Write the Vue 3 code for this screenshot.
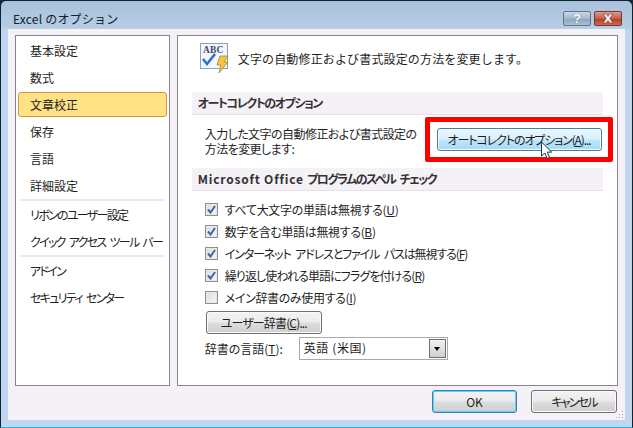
<script setup>
const groups = [
  [{ t: '基本設定' }, { t: '数式' }, { t: '文章校正', sel: true }, { t: '保存' }, { t: '言語' }, { t: '詳細設定' }],
  [{ t: 'リボンのユーザー設定', kana: true }, { t: 'クイック アクセス ツール バー', kana: true }],
  [{ t: 'アドイン', kana: true }, { t: 'セキュリティ センター', kana: true }]
]
const checks = [
  { t: 'すべて大文字の単語は無視する(', k: 'U', on: true, ls: -0.3 },
  { t: '数字を含む単語は無視する(', k: 'B', on: true, ls: -0.35 },
  { t: 'インターネット アドレスとファイル パスは無視する(', k: 'F', on: true, ls: -1.12 },
  { t: '繰り返し使われる単語にフラグを付ける(', k: 'R', on: true, ls: -0.9 },
  { t: 'メイン辞書のみ使用する(', k: 'I', on: false, ls: -0.35 }
]
</script>

<template>
  <div class="window">
    <div class="titlebar">
      <span class="title">Excel のオプション</span>
      <div class="controls">
        <div class="ctl help">?</div>
        <div class="ctl close">
          <svg width="16" height="11" viewBox="0 0 16 11"><path d="M3 1h3l2 2.5L10 1h3L9.6 5.5 13 10h-3L8 7.5 6 10H3l3.4-4.5z" fill="#fff" stroke="#7a2a20" stroke-width=".6"/></svg>
        </div>
      </div>
    </div>
    <div class="client">
      <div class="panes">
        <nav class="nav">
          <template v-for="(g, i) in groups" :key="i">
            <div v-if="i" class="sep"></div>
            <div v-for="it in g" :key="it.t" class="item" :class="{ sel: it.sel, kana: it.kana }">{{ it.t }}</div>
          </template>
        </nav>
        <main class="main">
          <div class="intro">
            <svg class="abc" width="29" height="31" viewBox="0 0 29 31">
              <rect x=".5" y=".5" width="27" height="25" fill="#f4f6fb" stroke="#8fa0bd"/>
              <text x="3" y="10" font-family="Liberation Serif" font-weight="700" font-size="9.5" fill="#3b4a6b">ABC</text>
              <path d="M3 16l4 5 8-10" fill="none" stroke="#2f6fd0" stroke-width="2.6"/>
              <path d="M20 13h8l-4 6h4l-9 11 2-8h-4z" fill="#f5c640" stroke="#a9892f" stroke-width=".8"/>
            </svg>
            <span>文字の自動修正および書式設定の方法を変更します。</span>
          </div>
          <h2 class="sect"><span class="sect-kana">オートコレクトのオプション</span></h2>
          <div class="acrow">
            <p>入力した文字の自動修正および書式設定の<br>方法を変更します:</p>
            <div class="hilite">
              <button class="btn hot">オートコレクトのオプション(<u>A</u>)...</button>
              <svg class="cursor" width="14" height="20" viewBox="0 0 14 20"><path d="M1.5 1v14l3.4-3 2.3 5.5 2.4-1-2.3-5.4h4.4z" fill="#fff" stroke="#0a3d4d"/></svg>
            </div>
          </div>
          <h2 class="sect second"><span class="sect-latin">Microsoft Office </span><span class="sect-kana2">プログラムのスペル チェック</span></h2>
          <div class="checks">
            <label v-for="c in checks" :key="c.k" class="check">
              <span class="box">
                <svg v-if="c.on" width="9" height="9" viewBox="0 0 9 9"><path d="M1 4.5l2.5 3L8 1" fill="none" stroke="#4a62a8" stroke-width="2"/></svg>
              </span>
              <span class="cap" :style="{ letterSpacing: c.ls + 'px' }">{{ c.t }}<u>{{ c.k }}</u>)</span>
            </label>
          </div>
          <button class="btn dict">ユーザー辞書(<u>C</u>)...</button>
          <div class="lang">
            <span class="langlabel">辞書の言語(<u>T</u>):</span>
            <div class="combo">
              <span class="val">英語 (米国)</span>
              <span class="arrow"><i></i></span>
            </div>
          </div>
        </main>
      </div>
      <div class="footer">
        <button class="btn ok">OK</button>
        <button class="btn cancel">キャンセル</button>
      </div>
      <div class="grip"></div>
    </div>
  </div>
</template>

<style>
html, body { margin: 0; background: #0c2a3a; }
</style>

<style scoped>
.window {
  width: 633px; height: 428px; box-sizing: border-box;
  border: 1px solid #10222e; border-bottom-color: #0fc3e8;
  border-radius: 6px 6px 0 0;
  background: linear-gradient(180deg, #a9c2db 0, #b4cbe3 25px, #c0d5ef 30px);
  padding: 0 7px 7px;
  display: flex; flex-direction: column;
  font-family: "Noto Sans CJK JP", sans-serif;
  font-size: 12px; color: #1e1e1e;
  font-feature-settings: "palt";
  overflow: hidden;
}
.titlebar { height: 28px; flex: none; display: flex; justify-content: space-between; }
.title { margin: 8px 0 0 5px; font-size: 12px; line-height: 19px; color: #10202c; font-feature-settings: normal; letter-spacing: .2px; }
.controls { display: flex; gap: 3px; margin-right: 3px; margin-top: 10px; height: 15px; }
.ctl {
  height: 15px; box-sizing: border-box; border: 1px solid #5f7488; border-radius: 2px;
  display: flex; align-items: center; justify-content: center;
}
.help {
  width: 28px; color: #fff; font: 700 13px "Liberation Sans", sans-serif;
  background: linear-gradient(180deg, #c9d7e6 0, #a4b8cd 50%, #8ba3bc 55%, #a9c0d8 100%);
  text-shadow: 0 0 1px #44586c;
}
.close {
  width: 28px; border-color: #7a3a32;
  background: linear-gradient(180deg, #dd9c8f 0, #c65d4b 50%, #b3402e 55%, #c96a55 100%);
}
.client {
  flex: 1; position: relative; background: #f5f1f6; min-height: 0;
  padding: 6px 7px 0; display: flex; flex-direction: column;
}
.panes { display: flex; gap: 7px; height: 351px; flex: none; }
.nav, .main { background: #fff; border: 1px solid #85838c; box-sizing: border-box; }
.nav { width: 155px; padding: 1px 2px 2px; }
.item { height: 27px; line-height: 27px; padding-left: 12px; white-space: nowrap; }
.item.kana { letter-spacing: -1.7px; word-spacing: 3px; }
.item.sel {
  height: 25px; line-height: 23px; margin: 1px 0; box-sizing: border-box;
  border: 1px solid #d8963c; border-radius: 3px; padding-left: 11px;
  background: #fee286;
}
.sep { height: 2px; margin: 0 2px; background: #ebebeb; }
.main { width: 442px; padding: 6px 14px 0; }
.intro { display: flex; align-items: center; gap: 9px; height: 33px; margin-left: 8px; letter-spacing: .15px; font-feature-settings: normal; }
.abc { flex: none; }
h2.sect {
  margin: 17px 0 0; height: 23px; line-height: 22px; padding-left: 6px; box-sizing: border-box;
  background: #f5f1f6; border-bottom: 1px solid #e4e1e6;
  font-size: 12px; font-weight: 700; color: #333; white-space: pre;
}
h2.second { margin-top: 0; }
.sect-kana { letter-spacing: -1.45px; }
.sect-latin { letter-spacing: .8px; }
.sect-kana2 { letter-spacing: -1.55px; word-spacing: 3px; }
.acrow { height: 53px; display: flex; justify-content: space-between; }
.acrow p { margin: 11px 0 0 13px; line-height: 15px; font-size: 12px; white-space: nowrap; letter-spacing: -.55px; }
.hilite {
  position: relative; width: 188px; height: 45px; margin: 2px -10px 0 0; flex: none;
  box-sizing: border-box; border: 5px solid #f00; border-radius: 2px;
  display: flex; align-items: center; justify-content: center;
}
.btn {
  font: inherit; color: inherit; padding: 0; box-sizing: border-box;
  border: 1px solid #707070; border-radius: 3px;
  background: linear-gradient(180deg, #f3f3f3 0, #ebebeb 48%, #dddddd 52%, #cfcfcf 100%);
  box-shadow: inset 0 0 0 1px #fafafa;
  white-space: nowrap;
}
.hot {
  width: 165px; height: 23px; letter-spacing: -1.1px;
  border-color: #3c7fb1;
  background: linear-gradient(180deg, #eaf6fd 0, #d9f0fc 48%, #bee6fd 52%, #a7d9f5 100%);
}
.cursor { position: absolute; left: 110px; top: 19px; }
.checks { display: flex; flex-direction: column; gap: 4px; margin: 9px 0 0 13px; }
.check { display: flex; align-items: center; gap: 7px; height: 18px; white-space: nowrap; }
.cap { word-spacing: 3px; }
.box {
  width: 11px; height: 11px; border: 1px solid #8e8f8f; flex: none;
  background: linear-gradient(135deg, #dcdcdc, #f6f6f6);
  display: flex; align-items: center; justify-content: center;
  box-shadow: inset 0 0 0 1px #e8e8e8;
}
.dict { display: block; width: 116px; height: 23px; margin: 5px 0 0 14px; letter-spacing: -.85px; }
.lang { display: flex; align-items: center; margin: 3px 0 0 13px; height: 23px; }
.langlabel { width: 94px; flex: none; box-sizing: border-box; white-space: nowrap; }
.combo {
  width: 149px; height: 23px; box-sizing: border-box; border: 1px solid #a9a9a9; background: #fff;
  display: flex; justify-content: space-between; align-items: stretch;
}
.val { padding-left: 4px; line-height: 20px; letter-spacing: .6px; }
.arrow {
  width: 17px; margin: 1px; border: 1px solid #707070; box-sizing: border-box;
  background: linear-gradient(180deg, #f2f2f2, #cfcfcf);
  display: flex; align-items: center; justify-content: center;
}
.arrow i { width: 0; height: 0; border: 3px solid transparent; border-top: 4px solid #000; border-bottom: 0; }
.footer { flex: 1; display: flex; justify-content: flex-end; gap: 14px; padding: 4px 1px 0 0; }
.ok, .cancel { height: 23px; width: 85px; }
.ok { border-color: #3c7fb1; box-shadow: inset 0 0 0 1px #5fd0f5; }
.cancel { width: 86px; letter-spacing: -1.8px; }
.grip {
  position: absolute; right: 2px; bottom: 2px; width: 8px; height: 8px;
  background-image: radial-gradient(#a9a9a9 1px, transparent 1px);
  background-size: 3px 3px;
  clip-path: polygon(100% 0, 100% 100%, 0 100%);
}
</style>
